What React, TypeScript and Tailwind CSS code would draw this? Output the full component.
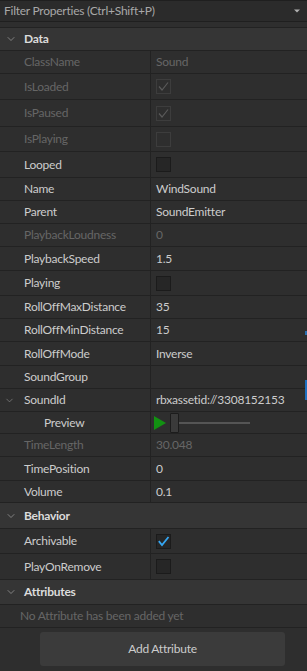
import { ChevronDown } from 'lucide-react';

type Row = {
  name: string;
  value?: string;
  check?: 'on' | 'off';
  disabled?: boolean;
  h: number;
  expand?: boolean;
  preview?: boolean;
};

const dataRows: Row[] = [
  { name: 'ClassName', value: 'Sound', disabled: true, h: 23 },
  { name: 'IsLoaded', check: 'on', disabled: true, h: 26 },
  { name: 'IsPaused', check: 'on', disabled: true, h: 27 },
  { name: 'IsPlaying', check: 'off', disabled: true, h: 25 },
  { name: 'Looped', check: 'off', h: 26 },
  { name: 'Name', value: 'WindSound', h: 23 },
  { name: 'Parent', value: 'SoundEmitter', h: 23 },
  { name: 'PlaybackLoudness', value: '0', disabled: true, h: 23 },
  { name: 'PlaybackSpeed', value: '1.5', h: 24 },
  { name: 'Playing', check: 'off', h: 25 },
  { name: 'RollOffMaxDistance', value: '35', h: 23 },
  { name: 'RollOffMinDistance', value: '15', h: 23 },
  { name: 'RollOffMode', value: 'Inverse', h: 24 },
  { name: 'SoundGroup', value: '', h: 23 },
  { name: 'SoundId', value: 'rbxassetid://3308152153', expand: true, h: 23 },
  { name: 'Preview', preview: true, h: 22 },
  { name: 'TimeLength', value: '30.048', disabled: true, h: 23 },
  { name: 'TimePosition', value: '0', h: 24 },
  { name: 'Volume', value: '0.1', h: 22 },
];

const behaviorRows: Row[] = [
  { name: 'Archivable', check: 'on', h: 25 },
  { name: 'PlayOnRemove', check: 'off', h: 26 },
];

function Checkbox({ state, disabled }: { state: 'on' | 'off'; disabled?: boolean }) {
  if (disabled) {
    return (
      <div className="w-[15px] h-[15px] border border-[#3d3d3d] bg-[#2e2e2e] flex items-center justify-center">
        {state === 'on' && (
          <svg width="13" height="13" viewBox="0 0 13 13">
            <path d="M2 6.5 L5 10 L11 2.5" fill="none" stroke="#5a5a5a" strokeWidth="1.2" />
          </svg>
        )}
      </div>
    );
  }
  return (
    <div className="w-[15px] h-[15px] border border-[#1b1b1b] bg-[#262626] flex items-center justify-center">
      {state === 'on' && (
        <svg width="13" height="13" viewBox="0 0 13 13">
          <path d="M1.8 6.2 L5 10 L11.5 2" fill="none" stroke="#35a6f2" strokeWidth="1.8" />
        </svg>
      )}
    </div>
  );
}

function PropRow({ row }: { row: Row }) {
  const text = row.disabled ? 'text-[#666666]' : 'text-[#cccccc]';
  return (
    <div className="flex border-b border-[#222222]" style={{ height: row.h }}>
      <div className="w-[151px] shrink-0 flex items-center border-r border-[#222222] relative">
        {row.expand && (
          <ChevronDown className="absolute left-[4px] w-[11px] h-[11px] text-[#8a8a8a]" strokeWidth={1.5} />
        )}
        <span className={`${text} ${row.preview ? 'pl-[44px]' : 'pl-[24px]'}`}>{row.name}</span>
      </div>
      <div className="flex-1 flex items-center pl-[5px]">
        {row.check && <Checkbox state={row.check} disabled={row.disabled} />}
        {row.value !== undefined && <span className={text}>{row.value}</span>}
        {row.preview && (
          <div className="flex items-center -ml-[3px]">
            <svg width="14" height="16" viewBox="0 0 14 16">
              <path d="M1 1 L13 8 L1 15 Z" fill="#129112" />
            </svg>
            <div className="w-[9px] h-[20px] ml-[3px] bg-[#3a3a3a] border border-[#1c1c1c] rounded-[1px]" />
            <div className="w-[71px] h-[2px] bg-[#555555]" />
          </div>
        )}
      </div>
    </div>
  );
}

function Section({ title, h }: { title: string; h: number }) {
  return (
    <div className="flex items-center bg-[#353535] border-b border-[#222222]" style={{ height: h }}>
      <ChevronDown className="ml-[5px] w-[12px] h-[12px] text-[#9a9a9a]" strokeWidth={1.5} />
      <span className="ml-[7px] font-bold text-[#dcdcdc]">{title}</span>
    </div>
  );
}

export default function App() {
  return (
    <div
      className="w-[307px] h-[671px] bg-[#2e2e2e] text-[12px] tracking-[-0.25px] leading-none overflow-hidden relative"
      style={{ fontFamily: 'Lato, "Noto Sans", sans-serif' }}
    >
      {/* filter */}
      <div className="h-[22px] flex items-center justify-between bg-[#2b2b2b] border-y border-[#1f1f1f] px-[4px]">
        <span className="text-[#a8a8a8]">Filter Properties (Ctrl+Shift+P)</span>
        <svg width="8" height="6" viewBox="0 0 8 6" className="mr-[2px]">
          <path d="M1 1.5 L7 1.5 L4 4.5 Z" fill="#b0b0b0" />
        </svg>
      </div>
      <div className="h-[6px] border-b border-[#222222]" />

      <Section title="Data" h={23} />
      {dataRows.map((r) => (
        <PropRow key={r.name} row={r} />
      ))}

      <Section title="Behavior" h={26} />
      {behaviorRows.map((r) => (
        <PropRow key={r.name} row={r} />
      ))}

      <Section title="Attributes" h={25} />
      <div className="h-[23px] flex items-center pl-[20px] border-b border-[#222222]">
        <span className="text-[#666666]">No Attribute has been added yet</span>
      </div>
      <div className="px-[40px] pt-[4px]">
        <div className="h-[34px] bg-[#3b3b3b] rounded-[3px] flex items-center justify-center text-[#cccccc] w-[245px]">
          Add Attribute
        </div>
      </div>

      {/* scrollbar marks */}
      <div className="absolute right-0 top-[331px] w-[2px] h-[4px] bg-[#2a6fb0]" />
      <div className="absolute right-0 top-[380px] w-[2px] h-[20px] bg-[#1e6fc0]" />
    </div>
  );
}
